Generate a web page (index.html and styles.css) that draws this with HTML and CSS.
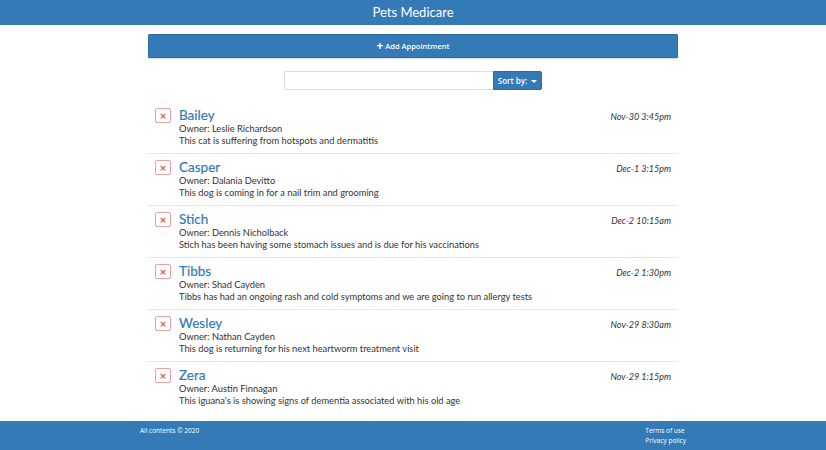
FILE: index.html
```html
<!DOCTYPE html>
<html>
<head>
<meta charset="utf-8">
<link rel="stylesheet" href="styles.css">
</head>
<body>
<header class="topbar">Pets Medicare</header>
<main class="container">
  <button class="add-btn"><span class="plus">+</span> Add Appointment</button>
  <div class="search-row">
    <div class="search">
      <input class="search-input" type="text">
      <button class="sort-btn">Sort by: <span class="caret"></span></button>
    </div>
  </div>
  <ul class="list">
    <li class="item">
      <button class="del">×</button>
      <div class="info">
        <div class="name">Bailey</div>
        <div class="owner">Owner: Leslie Richardson</div>
        <div class="desc">This cat is suffering from hotspots and dermatitis</div>
      </div>
      <div class="date">Nov-30 3:45pm</div>
    </li>
    <li class="item">
      <button class="del">×</button>
      <div class="info">
        <div class="name">Casper</div>
        <div class="owner">Owner: Dalania Devitto</div>
        <div class="desc">This dog is coming in for a nail trim and grooming</div>
      </div>
      <div class="date">Dec-1 3:15pm</div>
    </li>
    <li class="item">
      <button class="del">×</button>
      <div class="info">
        <div class="name">Stich</div>
        <div class="owner">Owner: Dennis Nicholback</div>
        <div class="desc">Stich has been having some stomach issues and is due for his vaccinations</div>
      </div>
      <div class="date">Dec-2 10:15am</div>
    </li>
    <li class="item">
      <button class="del">×</button>
      <div class="info">
        <div class="name">Tibbs</div>
        <div class="owner">Owner: Shad Cayden</div>
        <div class="desc">Tibbs has had an ongoing rash and cold symptoms and we are going to run allergy tests</div>
      </div>
      <div class="date">Dec-2 1:30pm</div>
    </li>
    <li class="item">
      <button class="del">×</button>
      <div class="info">
        <div class="name">Wesley</div>
        <div class="owner">Owner: Nathan Cayden</div>
        <div class="desc">This dog is returning for his next heartworm treatment visit</div>
      </div>
      <div class="date">Nov-29 8:30am</div>
    </li>
    <li class="item last">
      <button class="del">×</button>
      <div class="info">
        <div class="name">Zera</div>
        <div class="owner">Owner: Austin Finnagan</div>
        <div class="desc">This iguana's is showing signs of dementia associated with his old age</div>
      </div>
      <div class="date">Nov-29 1:15pm</div>
    </li>
  </ul>
</main>
<footer class="footer">
  <div class="copy">All contents © 2020</div>
  <div class="links">
    <div>Terms of use</div>
    <div>Privacy policy</div>
  </div>
</footer>
</body>
</html>
```
FILE: styles.css
```css
* { box-sizing: border-box; }
html, body { margin: 0; padding: 0; }
body {
  font-family: Lato, "Open Sans", sans-serif;
  color: #333;
  background: #fff;
  width: 826px;
  height: 450px;
  overflow: hidden;
  display: flex;
  flex-direction: column;
}
.topbar {
  height: 25px;
  background: #337ab7;
  color: #fff;
  font-size: 13px;
  text-align: center;
  line-height: 24px;
  flex: none;
}
.container {
  width: 530px;
  margin: 0 auto;
  padding-top: 9px;
  flex: 1;
}
.add-btn {
  display: block;
  width: 100%;
  height: 24px;
  background: #337ab7;
  border: 1px solid #2e6da4;
  border-radius: 1px;
  color: #fff;
  font-family: "Open Sans", sans-serif;
  font-size: 7.5px;
  font-weight: 600;
  padding: 0;
  box-shadow: 0 1px 1px rgba(0,0,0,0.15);
}
.plus { font-size: 12px; font-weight: 700; line-height: 0; vertical-align: -1px; }
.search-row {
  display: flex;
  justify-content: center;
  margin-top: 13px;
}
.search { display: flex; height: 19px; }
.search-input {
  width: 209px;
  height: 19px;
  border: 1px solid #ddd;
  border-right: none;
  border-radius: 2px 0 0 2px;
  padding: 0;
  margin: 0;
}
.sort-btn {
  width: 49px;
  height: 19px;
  background: #337ab7;
  border: 1px solid #2e6da4;
  border-radius: 0 2px 2px 0;
  color: #fff;
  font-family: "Open Sans", sans-serif;
  font-size: 8px;
  font-weight: 600;
  padding: 0;
  margin: 0;
}
.caret {
  display: inline-block;
  width: 0; height: 0;
  border-left: 3px solid transparent;
  border-right: 3px solid transparent;
  border-top: 3px solid #fff;
  vertical-align: 1px;
  margin-left: 2px;
}
.list {
  list-style: none;
  margin: 12px 0 0;
  padding: 0;
}
.item {
  display: flex;
  align-items: flex-start;
  height: 52px;
  padding: 6px 7px 0 7px;
  border-bottom: 1px solid #e5e5e5;
}
.item.last { border-bottom: none; }
.del {
  flex: none;
  width: 16px;
  height: 15px;
  margin-top: 0;
  border: 1px solid #e8a0a0;
  border-radius: 2px;
  background: #fff;
  color: #d9534f;
  font-size: 9px;
  font-weight: 700;
  line-height: 12px;
  padding: 0;
  font-family: "DejaVu Sans", sans-serif;
}
.info { flex: 1; padding-left: 8px; }
.name {
  color: #337ab7;
  font-size: 13.5px;
  font-weight: 400;
  line-height: 15px;
  -webkit-text-stroke: 0.2px #337ab7;
}
.owner, .desc {
  font-size: 9.3px;
  line-height: 12px;
  color: #333;
}
.date {
  font-size: 9px;
  font-style: italic;
  font-weight: 400;
  color: #333;
  margin-top: 3px;
}
.footer {
  flex: none;
  height: 29px;
  background: #337ab7;
  color: #fff;
  font-family: "Open Sans", sans-serif;
  font-size: 6.5px;
  display: flex;
  justify-content: space-between;
  padding: 5px 140px 0 140px;
  line-height: 10px;
}
```
